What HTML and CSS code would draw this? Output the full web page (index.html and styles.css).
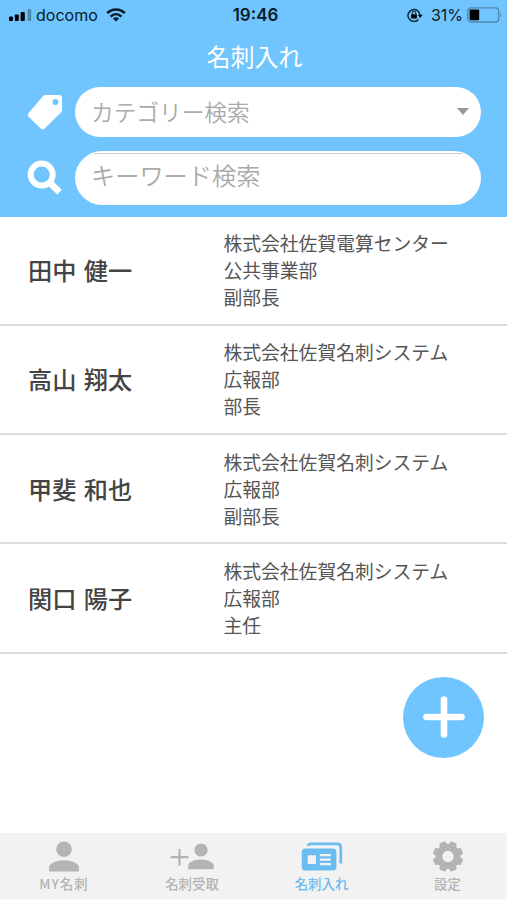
FILE: index.html
```
<!DOCTYPE html>
<html lang="ja">
  <head>
    <meta charset="UTF-8" />
    <meta name="viewport" content="width=device-width, initial-scale=1.0" />
    <title>名刺入れ</title>
    <link rel="stylesheet" href="styles.css">
  </head>
  <body>
    <div class="app">
      <header class="header">
        <!-- ステータスバー -->
        <div class="status">
          <div class="status-left">
            <svg class="signal" width="23" height="12" viewBox="0 0 23 12">
              <rect x="0" y="7.5" width="4" height="4.5" rx="1"/>
              <rect x="5.8" y="5.5" width="4" height="6.5" rx="1"/>
              <rect x="11.6" y="3" width="4.2" height="9" rx="1"/>
              <rect x="18.6" y="0" width="3.6" height="12" rx="1" opacity=".3"/>
            </svg>
            <span class="carrier">docomo</span>
            <svg class="wifi" width="20" height="14" viewBox="0 0 20 14">
              <g fill="none" stroke="#0b1a28" stroke-width="2.6">
                <path d="M1.2 5.2C6.2 .2 13.8 .2 18.8 5.2"/>
                <path d="M4.6 8.6C7.8 5.5 12.2 5.5 15.4 8.6"/>
              </g>
              <path d="M6.9 10.5Q10 8 13.1 10.5L10 13.6z" fill="#0b1a28"/>
            </svg>
          </div>
          <span class="time">19:46</span>
          <div class="status-right">
            <svg class="lock" width="16" height="14" viewBox="0 0 16 14">
              <path d="M11.4 11.6A6 6 0 1 1 13 7.4" fill="none" stroke="#10283a" stroke-width="1.5"/>
              <path d="M10.8 6.7h4.8L13.2 10z"/>
              <rect x="4.1" y="6.2" width="5.8" height="4.2" rx=".6"/>
              <path d="M5.2 6.5V5a1.8 1.8 0 0 1 3.6 0v1.5" fill="none" stroke="#10283a" stroke-width="1.1"/>
            </svg>
            <span class="percent">31%</span>
            <svg class="battery" width="36" height="16" viewBox="0 0 36 16">
              <rect x=".8" y=".8" width="30.8" height="14.2" rx="3" fill="none" stroke="#4d86ad" stroke-width="1.3"/>
              <rect x="2.6" y="2.6" width="9.6" height="10.6" rx="1" fill="#000"/>
              <path d="M33.3 5.6q2 2.3 0 4.6z" fill="#4d86ad"/>
            </svg>
          </div>
        </div>
        <h1 class="title">名刺入れ</h1>
        <!-- 検索フォーム -->
        <div class="search">
          <div class="search-row">
            <svg class="search-icon" width="36" height="36" viewBox="0 0 36 36">
              <path fill="#fff" fill-rule="evenodd" d="M18.5 1H32Q35 1 35 4V16Q35 17.5 34 18.6L17.6 34.6Q15.6 36.4 13.6 34.6L1.6 22.8Q0 21 1.6 19L16 2.2Q17 1 18.5 1zM28.4 5a3 3 0 1 0 0 6 3 3 0 0 0 0-6z"/>
            </svg>
            <div class="field category">
              <span>カテゴリー検索</span>
              <i class="caret"></i>
            </div>
          </div>
          <div class="search-row">
            <svg class="search-icon" width="36" height="36" viewBox="0 0 36 36">
              <circle cx="14.7" cy="14.6" r="11" fill="none" stroke="#fff" stroke-width="6"/>
              <path d="M22.5 22.5L32.6 32.2" stroke="#fff" stroke-width="6.6"/>
            </svg>
            <div class="field keyword">
              <span>キーワード検索</span>
            </div>
          </div>
        </div>
      </header>

      <!-- 名刺一覧 -->
      <ul class="list">
        <li class="card">
          <div class="name">田中 健一</div>
          <div class="info">株式会社佐賀電算センター<br>公共事業部<br>副部長</div>
        </li>
        <li class="card">
          <div class="name">高山 翔太</div>
          <div class="info">株式会社佐賀名刺システム<br>広報部<br>部長</div>
        </li>
        <li class="card">
          <div class="name">甲斐 和也</div>
          <div class="info">株式会社佐賀名刺システム<br>広報部<br>副部長</div>
        </li>
        <li class="card">
          <div class="name">関口 陽子</div>
          <div class="info">株式会社佐賀名刺システム<br>広報部<br>主任</div>
        </li>
      </ul>

      <div class="add-area">
        <div class="add">
          <svg width="42" height="42" viewBox="0 0 42 42">
            <path d="M21 3.5V38.5M3.5 21H38.5" stroke="#fff" stroke-width="6.6" stroke-linecap="round"/>
          </svg>
        </div>
      </div>

      <!-- タブバー -->
      <nav class="tabs">
        <div class="tab">
          <svg width="32" height="32" viewBox="0 0 32 32" fill="#b4b4b4">
            <circle cx="16" cy="9.2" r="7.8"/>
            <path d="M1 31.5V27.5C1 22.5 10 20.3 16 20.3S31 22.5 31 27.5V31.5z"/>
          </svg>
          <span class="my">MY名刺</span>
        </div>
        <div class="tab">
          <svg width="44" height="32" viewBox="0 0 44 32" fill="#b4b4b4">
            <path d="M9.5 9V25.5M.5 17.2H18.5" stroke="#b4b4b4" stroke-width="2.3"/>
            <circle cx="31" cy="10" r="6.6"/>
            <path d="M18.2 29.2V26C18.2 21.6 26 19.6 31 19.6S43.8 21.6 43.8 26V29.2z"/>
          </svg>
          <span>名刺受取</span>
        </div>
        <div class="tab active">
          <svg width="42" height="32" viewBox="0 0 42 32">
            <path d="M7 5.8Q7.5 3.9 10 3.9H36Q39.8 3.9 39.8 7.5V23.5" fill="none" stroke="#6bbcf0" stroke-width="2.7"/>
            <rect x=".8" y="8.6" width="34.6" height="22" rx="3.6" fill="#6bbcf0"/>
            <path fill="#f2f2f2" d="M6.8 15.2h8.2v8.8H6.8zM18.8 14h11v2.2h-11zM18.8 18.5h11v2.2h-11zM18.8 23h11v2.2h-11z"/>
          </svg>
          <span>名刺入れ</span>
        </div>
        <div class="tab">
          <svg width="32" height="32" viewBox="-16 -16.5 32 32" fill="#b4b4b4">
            <circle r="9" fill="none" stroke="#b4b4b4" stroke-width="6.6"/>
            <g>
              <path id="tooth" d="M-4.4 -10.5L-3 -15.2H3L4.4 -10.5z" transform="rotate(22.5)"/>
              <use href="#tooth" transform="rotate(45)"/>
              <use href="#tooth" transform="rotate(90)"/>
              <use href="#tooth" transform="rotate(135)"/>
              <use href="#tooth" transform="rotate(180)"/>
              <use href="#tooth" transform="rotate(225)"/>
              <use href="#tooth" transform="rotate(270)"/>
              <use href="#tooth" transform="rotate(315)"/>
            </g>
          </svg>
          <span>設定</span>
        </div>
      </nav>
    </div>
  </body>
</html>
```

FILE: styles.css
```
* {
  box-sizing: border-box;
}
body {
  margin: 0;
  padding: 0;
  background: #fff;
  font-family: "Noto Sans CJK JP", sans-serif;
}
svg {
  display: block;
  flex: none;
}
.app {
  display: flex;
  flex-direction: column;
  height: 900px;
  overflow: hidden;
}
.header {
  height: 216.5px;
  background: #70c5ff;
}
.status {
  display: grid;
  grid-template-columns: 1fr auto 1fr;
  align-items: center;
  height: 30px;
  padding: 0 7px 0 9px;
  font-family: Inter, "Liberation Sans", sans-serif;
  font-size: 16px;
  color: #0b1a28;
}
.status-left {
  display: flex;
  align-items: center;
}
.carrier {
  margin: 0 8px 0 4px;
  font-size: 16px;
}
.time {
  padding-left: 2px;
  font-weight: 600;
  font-size: 17px;
}
.status-right {
  display: flex;
  align-items: center;
  justify-content: flex-end;
  margin-right: -3px;
}
.lock {
  margin-right: 8px;
}
.percent {
  margin-right: 4px;
}
.title {
  margin: 8px 0 0;
  padding-left: 2px;
  height: 36px;
  line-height: 36px;
  text-align: center;
  font-size: 24px;
  font-weight: 400;
  color: #fff;
}
.search {
  display: flex;
  flex-direction: column;
  gap: 14px;
  padding: 13px 26px 0 27px;
}
.search-row {
  display: flex;
  align-items: center;
  gap: 12px;
}
.field {
  display: flex;
  flex: 1;
  align-items: center;
  justify-content: space-between;
  padding: 0 12px 2px 16px;
  background: #fff;
  color: #aaa;
  font-weight: 350;
}
.category {
  height: 50px;
  border-radius: 25px;
  font-size: 22.7px;
}
.keyword {
  height: 54px;
  padding-bottom: 8px;
  border-radius: 27px;
  font-size: 24.2px;
  background: linear-gradient(#ccc, #ccc) center 2px / calc(100% - 38px) 1px no-repeat #fff;
}
.caret {
  border: 6px solid transparent;
  border-top: 7px solid #999;
  border-bottom: 0;
}
.list {
  margin: 0;
  padding: 0;
  list-style: none;
}
.card {
  display: grid;
  grid-template-columns: 195.5px 1fr;
  align-items: center;
  height: 109.3px;
  padding: 0 0 1.4px 28px;
  border-bottom: 2px solid #dcdcdc;
  color: #444;
}
.name {
  font-size: 24.2px;
  font-weight: 500;
  word-spacing: 2px;
}
.info {
  font-size: 18.8px;
  line-height: 27px;
  color: #555;
}
.add-area {
  display: flex;
  flex: 1;
  justify-content: flex-end;
  padding: 23px 23px 0 0;
}
.add {
  display: flex;
  align-items: center;
  justify-content: center;
  width: 81px;
  height: 81px;
  border-radius: 50%;
  background: #70c5ff;
}
.tabs {
  display: grid;
  grid-template-columns: 128px 128px 131px 121px;
  height: 67px;
  background: #f2f2f2;
  border-bottom: 1px solid #fafafa;
}
.tab {
  display: flex;
  flex-direction: column;
  align-items: center;
  padding-top: 7px;
  font-size: 13.4px;
  font-weight: 500;
  line-height: 22px;
  color: #b4b4b4;
}
.my {
  letter-spacing: 1px;
}
.active {
  color: #6bbcf0;
}
```
